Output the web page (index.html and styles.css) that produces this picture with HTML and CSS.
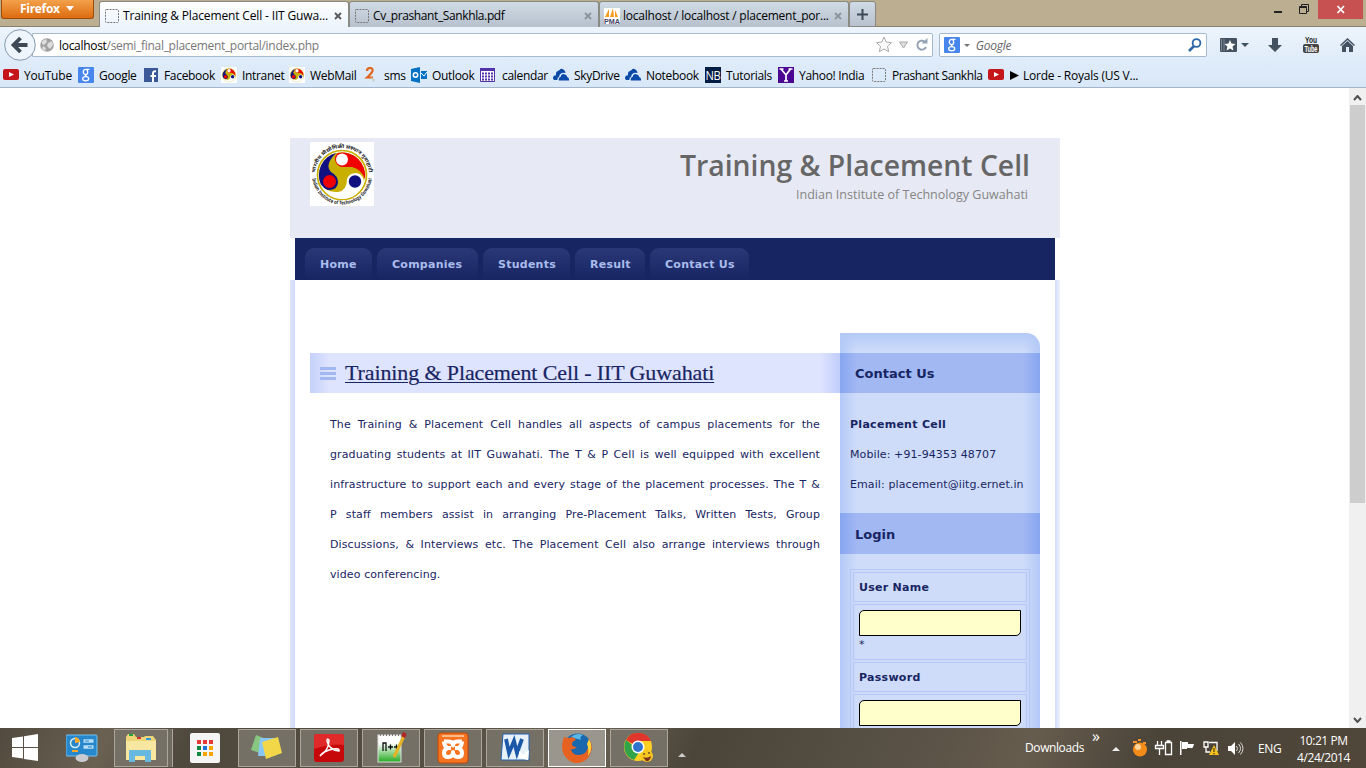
FILE: index.html
```html
<!DOCTYPE html>
<html lang="en">
<head>
<meta charset="utf-8">
<title>Training &amp; Placement Cell - IIT Guwahati</title>
<link rel="stylesheet" href="styles.css">
</head>
<body>
<svg width="0" height="0" class="defs">
  <symbol id="blank" viewBox="0 0 16 16"><rect x="1.5" y="1.5" width="13" height="13" rx="1" fill="none" stroke="#777" stroke-dasharray="2 1"/></symbol>
  <symbol id="yt" viewBox="0 0 16 16"><rect y="2" width="16" height="11" rx="2" fill="#c4161b"/><path d="M6 5v5l5-2.500z" fill="#fff"/></symbol>
  <symbol id="goog" viewBox="0 0 16 16"><rect width="16" height="16" rx="1" fill="#4787ed"/><ellipse cx="7.500" cy="5" rx="2.200" ry="2.700" fill="none" stroke="#fff" stroke-width="1.300"/><path d="M8 2.300h3.500M8.500 7.500q-2 1.500 0 2.300" fill="none" stroke="#fff" stroke-width="1.200"/><ellipse cx="7.700" cy="11.700" rx="3" ry="2.100" fill="none" stroke="#fff" stroke-width="1.300"/></symbol>
  <symbol id="emblem" viewBox="0 0 64 64">
    <circle cx="32" cy="33" r="24.500" fill="#fff" stroke="#c9b000" stroke-width="1.700"/>
    <circle cx="32" cy="33" r="22.800" fill="#c9b000"/>
    <path d="M26 11A23 23 0 0 0 11 43Q14 48 20 48Q28 47 28 40Q28 34 21 30Q14 23 26 11z" fill="#101080"/>
    <path d="M28 11A23 23 0 0 1 55 37Q51 27 42 25Q36 25 31 25Q25 22 25 17Q25 13 28 11z" fill="#f00000"/>
    <path d="M10.500 42A23 23 0 0 0 54 41Q54 32 46 31Q39 31 37 37Q37 49 28 50Q17 51 10.500 42z" fill="#fff"/>
    <circle cx="32" cy="17.500" r="6" fill="#fff"/><circle cx="19.500" cy="39.500" r="6.500" fill="#f00000"/><circle cx="45" cy="39.500" r="6.200" fill="#101080"/>
  </symbol>
  <symbol id="cloud" viewBox="0 0 16 16"><path d="M0 11.500Q-.2 8.500 3 8.300Q2.500 4 6 3.500Q8 .5 11 3Q12.500 4 12.500 6Q7 5 6 10Q4 10.500 4.500 13H1z" fill="#0c4aa8"/><path d="M6 13.500Q5 10.500 7.500 10Q8.500 5.500 12.500 7.700Q14 8 14.200 10Q16.500 11 16 13.500z" fill="#0c4aa8"/></symbol>
  <symbol id="x" viewBox="0 0 8 8"><path d="M1 1l6 6M7 1L1 7" stroke="currentColor" stroke-width="1.800"/></symbol>
</svg>

<header class="titlebar">
  <div class="firefox"><span>Firefox</span><svg width="8" height="5"><path d="M0 0h8L4 5z" fill="#fff"/></svg></div>
  <div class="tab active"><svg class="i16"><use href="#blank"/></svg><span>Training &amp; Placement Cell - IIT Guwa...</span><svg class="close"><use href="#x"/></svg></div>
  <div class="tab"><svg class="i16"><use href="#blank"/></svg><span>Cv_prashant_Sankhla.pdf</span><svg class="close"><use href="#x"/></svg></div>
  <div class="tab"><svg class="i16" viewBox="0 0 16 16"><rect width="16" height="16" fill="#fff"/><path d="M1 9L5 1v8zM6 9L9 0l1 9zM11 9l0-7 3 7z" fill="#f79a1c"/><text x="0" y="15.500" textLength="16" lengthAdjust="spacingAndGlyphs" class="pma">PMA</text></svg><span>localhost / localhost / placement_por...</span><svg class="close"><use href="#x"/></svg></div>
  <div class="newtab"><svg width="11" height="11"><path d="M5.500 0v11M0 5.500h11" stroke="#3d4957" stroke-width="2"/></svg></div>
  <div class="winbtns"><svg width="112" height="20"><path d="M21 12h8" stroke="#222" stroke-width="2"/><path d="M46.500 6.500h7v7h-7z M48.500 6V4.500h7v7H54M46 7.500h8" fill="none" stroke="#222"/><rect x="65" width="45" height="19" fill="#c75050"/><path d="M84.500 6l6.500 7M91 6l-6.500 7" stroke="#fff" stroke-width="1.800"/></svg></div>
</header>

<nav class="toolbar">
  <svg class="back" viewBox="0 0 32 32"><circle cx="16" cy="16" r="15.300" fill="#eef5fc" stroke="#8598ad"/><path d="M23.500 16H10M16.500 9L9.500 16l7 7" fill="none" stroke="#3d4957" stroke-width="3.800"/></svg>
  <div class="url">
    <svg width="14" height="14" viewBox="0 0 14 14"><circle cx="7" cy="7" r="6.800" fill="#a1a1a1"/><path d="M2 3l4-2 1 3-3 3-2-1zM8 5l4-2 1 4-3 4-3-3zM3 8l3 2-1 3-3-2z" fill="#ddd"/></svg>
    <span class="addr"><b>localhost</b>/semi_final_placement_portal/index.php</span>
    <svg class="urlicons" width="54" height="20" viewBox="0 0 54 20"><path d="M8 2l2.200 5 5.300.6-4 3.700 1.200 5.400L8 14l-4.700 2.700 1.200-5.400-4-3.700 5.300-.6z" fill="#fafafa" stroke="#aaa"/><path d="M23.500 7h8l-4 6z" fill="#ddd" stroke="#aaa"/><path d="M48.500 6.500A4.500 4.500 0 1 0 50 12" fill="none" stroke="#97a4b5" stroke-width="2"/><path d="M45.500 8.500h6V3z" fill="#97a4b5"/></svg>
  </div>
  <div class="search"><svg class="i16"><use href="#goog"/></svg><svg class="caret" width="6" height="3"><path d="M0 0h6L3 3z" fill="#777"/></svg><i>Google</i><svg class="mag" width="14" height="14"><circle cx="8.500" cy="5" r="3.900" fill="none" stroke="#2d67a8" stroke-width="1.800"/><path d="M6 8L1 13" stroke="#2d67a8" stroke-width="2.500"/></svg></div>
  <svg class="tools" width="146" height="20" viewBox="0 0 146 20"><g fill="#445160"><rect y="3" width="17" height="14" rx="1"/><path d="M1.500 4v12M4 4v12" stroke="#7c8894"/><path d="M10 5l1.500 3.500 4 .4-3 2.700.9 4-3.400-2-3.500 2 .9-4-3-2.700 4-.4z" fill="#fff"/><path d="M21 8h8l-4 4z"/><path d="M52 3h6v7h4l-7 7-7-7h4z"/><rect x="83" y="9" width="16" height="9" rx="2" fill="#444"/><path d="M120 10l7.500-7 7.500 7-1 1-6.500-6-6.500 6z"/><path d="M122 11l5.500-5 5.500 5v6h-4v-5h-3v5h-4z"/></g><text x="85" y="7.500" textLength="12" lengthAdjust="spacingAndGlyphs" class="yt1">You</text><text x="84.500" y="16.500" textLength="13" lengthAdjust="spacingAndGlyphs" class="yt2">Tube</text></svg>
</nav>

<nav class="bookmarks">
  <span><svg class="i16"><use href="#yt"/></svg>YouTube</span>
  <span><svg class="i16"><use href="#goog"/></svg>Google</span>
  <span><svg class="i16" viewBox="0 0 16 16"><rect x="1" y="1" width="14" height="14" fill="#3b5998"/><path d="M10 15V6q0-2 3-1.700M7.500 9H13" fill="none" stroke="#fff" stroke-width="2"/></svg>Facebook</span>
  <span><svg class="i16 white" viewBox="3 4 58 58"><use href="#emblem" width="64" height="64"/></svg>Intranet</span>
  <span><svg class="i16 white" viewBox="3 4 58 58"><use href="#emblem" width="64" height="64"/></svg>WebMail</span>
  <span><svg class="i16" viewBox="0 0 16 16"><path d="M3 4q0-3 3-3t2.500 3Q8 6 3 10.500h6" fill="none" stroke="#e1641c" stroke-width="2.200"/><path d="M7 10l4 3-2 2z" fill="#ccc"/></svg>sms</span>
  <span><svg class="i16" viewBox="0 0 16 16"><path d="M0 2l9-2v16l-9-2z" fill="#0072c6"/><circle cx="4.500" cy="8" r="2.200" fill="none" stroke="#fff" stroke-width="1.500"/><path d="M10 4h6v8h-6z" fill="#0072c6"/><path d="M10 6l3 3 3-4" stroke="#fff" fill="none"/></svg>Outlook</span>
  <span><svg class="i16" viewBox="0 0 16 16"><path d="M.5 1.500h14v13H.5z" fill="#fff" stroke="#5133ab"/><path d="M0 1h15v3H0z" fill="#5133ab"/><path d="M2 6.500h11M2 9.500h11M2 12.500h11" stroke="#5133ab" stroke-width="2" stroke-dasharray="2 1"/></svg>calendar</span>
  <span><svg class="i16"><use href="#cloud"/></svg>SkyDrive</span>
  <span><svg class="i16"><use href="#cloud"/></svg>Notebook</span>
  <span><svg class="i16" viewBox="0 0 16 16"><rect width="16" height="16" fill="#051c44"/><text x="0.500" y="12.500" textLength="15" lengthAdjust="spacingAndGlyphs" class="wt">NB</text></svg>Tutorials</span>
  <span><svg class="i16" viewBox="0 0 16 16"><rect width="16" height="16" fill="#4b0791"/><path d="M3 2l5 6 4.500-6M8 8v6M1.500 2h4M10.500 2h4M6 14h4" fill="none" stroke="#fff" stroke-width="1.700"/></svg>Yahoo! India</span>
  <span><svg class="i16"><use href="#blank"/></svg>Prashant Sankhla</span>
  <span class="lorde"><svg class="i16"><use href="#yt"/></svg><svg class="play" width="9" height="9"><path d="M0 0l9 4.500L0 9z"/></svg>Lorde - Royals (US V...</span>
</nav>

<div class="viewport">
  <main class="page">
    <header class="banner">
      <svg class="logo" viewBox="0 0 64 64"><rect width="64" height="64" fill="#fff"/><use href="#emblem" width="64" height="64"/><path id="arc1" d="M5 33A27 27 0 0 1 59 33" fill="none"/><path id="arc2" d="M2 32.500A30 30 0 0 0 62 32.500" fill="none"/><text class="ring"><textPath href="#arc1" startOffset="2" textLength="80" lengthAdjust="spacingAndGlyphs">भारतीय प्रौद्योगिकी संस्थान गुवाहाटी</textPath></text><text class="ring"><textPath href="#arc2" startOffset="4" textLength="86" lengthAdjust="spacingAndGlyphs">Indian Institute of Technology Guwahati</textPath></text></svg>
      <svg class="brand" width="352" height="72"><text class="b1" x="0" y="34" textLength="350" lengthAdjust="spacingAndGlyphs">Training &amp; Placement Cell</text><text class="b2" x="116" y="57" textLength="232" lengthAdjust="spacingAndGlyphs">Indian Institute of Technology Guwahati</text></svg>
    </header>
    <nav class="menu"><a>Home</a><a>Companies</a><a>Students</a><a>Result</a><a>Contact Us</a></nav>
    <div class="body">
      <section class="article">
        <h1><i class="bars"></i><u>Training &amp; Placement Cell - IIT Guwahati</u></h1>
        <p><span>The Training &amp; Placement Cell handles all aspects of campus placements for the</span> <span>graduating students at IIT Guwahati. The T &amp; P Cell is well equipped with excellent</span> <span>infrastructure to support each and every stage of the placement processes. The T &amp;</span> <span>P staff members assist in arranging Pre-Placement Talks, Written Tests, Group</span> <span>Discussions, &amp; Interviews etc. The Placement Cell also arrange interviews through</span> <span>video conferencing.</span></p>
      </section>
      <aside class="side">
        <h2>Contact Us</h2>
        <div class="contact"><b>Placement Cell</b><span>Mobile: +91-94353 48707</span><span>Email: placement@iitg.ernet.in</span></div>
        <h2 class="login">Login</h2>
        <div class="form">
          <div class="label">User Name</div>
          <div class="field"><input><span>*</span></div>
          <div class="label">Password</div>
          <div class="field"><input type="password"></div>
        </div>
      </aside>
    </div>
  </main>
  <div class="scroll"><svg width="9" height="6"><path d="M1 5l3.500-4L8 5" fill="none" stroke="#505050" stroke-width="2"/></svg><div class="thumb"></div><svg width="9" height="6"><path d="M1 1l3.500 4L8 1" fill="none" stroke="#505050" stroke-width="2"/></svg></div>
</div>

<footer class="taskbar">
  <div class="task plain"><svg width="28" height="28"><path d="M1 4l11-1.600V13H1zM13 2.200L27 0v13H13zM1 14h11v10.500L1 23zM13 14h14v13l-14-2z" fill="#fff"/></svg></div>
  <div class="task plain"><svg width="32" height="28"><rect x="0" y="1" width="31" height="21" rx="1" fill="#2787cc" stroke="#76c1ee"/><circle cx="9" cy="9" r="4.500" fill="none" stroke="#d7effb" stroke-width="1.500"/><path d="M9 9V3a6 6 0 0 1 5 5z" fill="#ffa726"/><path d="M17.500 7h10M17.500 13h10" stroke="#b9def5" stroke-width="3.500"/><path d="M19 7h4M22 13h4" stroke="#2787cc"/><path d="M6 17h6" stroke="#f9a825" stroke-width="2"/><ellipse cx="16" cy="24" rx="6.500" ry="4" fill="#c8cbd0"/></svg></div>
  <div class="task stack"><svg width="34" height="30"><path d="M2 4l2-3h6l2 3h8l1-1h8l3 4v20H2z" fill="#ecd477"/><path d="M5 2h4" stroke="#22a43c" stroke-width="2"/><path d="M13 5h4" stroke="#c33" stroke-width="2"/><path d="M22 6h5" stroke="#39d" stroke-width="2"/><path d="M2 8h30v19H2z" fill="#f8e7a0"/><path d="M5 29V18q0-1 1-1h20q1 0 1 1v11h-6v-6H11v6z" fill="#68b9df"/></svg></div>
  <div class="task plain"><svg width="30" height="30"><rect width="30" height="30" rx="2" fill="#f5f5f5"/><g stroke-width="4" fill="none"><path d="M7 9h16" stroke="#e53935" stroke-dasharray="4 2"/><path d="M7 15h4M7 21h4" stroke="#138a43"/><path d="M13 15h4" stroke="#1976d2"/><path d="M19 15h4M13 21h4M19 21h4" stroke="#f9a500"/></g></svg></div>
  <div class="task"><svg width="34" height="28"><path d="M6 1l10 4-3 15-12-4z" fill="#88c782"/><path d="M10 4h15v18H8z" fill="#87c7f2"/><path d="M12 8l16-5 4 16-16 6z" fill="#f2d849"/></svg></div>
  <div class="task"><svg width="30" height="28"><rect width="30" height="28" rx="3" fill="#c7080b"/><path d="M0 3q0-3 3-3h24q3 0 3 3v8Q18 9 0 15z" fill="#e02a2a"/><path d="M6 22Q15 16 15 6q-2-2-2 1 2 9 12 10 1-3-6-2Q9 17 6 22z" fill="none" stroke="#fff" stroke-width="1.500"/></svg></div>
  <div class="task"><svg width="32" height="32"><defs><linearGradient id="npp" x2="0" y2="1"><stop offset=".3" stop-color="#fff"/><stop offset="1" stop-color="#25aa20"/></linearGradient></defs><rect x="3" y="3" width="23" height="27" fill="url(#npp)" stroke="#ddd"/><path d="M5 3h20" stroke="#777" stroke-width="2" stroke-dasharray="1 2"/><path d="M8 19v-8h3v8M13 15h5M15.500 12.500v5M19 15h5M21.500 12.500v5" stroke="#111" fill="none" stroke-width="1.300"/><path d="M29 4L19 25" stroke="#e5b323" stroke-width="3"/><path d="M30 1l-2 4" stroke="#b32424" stroke-width="4"/></svg></div>
  <div class="task"><svg width="32" height="32"><rect x="1" y="1" width="30" height="30" rx="3" fill="#f57321" stroke="#bd4907"/><path d="M5 4h22" stroke="#fbb98a" stroke-width="2"/><g fill="none" stroke="#fff" stroke-width="4" stroke-linejoin="round"><path d="M7 9.500h5q4 0 4 4 0-4 4-4h5M7 9.500q0 5 4 6.500-4 1-4 5 0 4 4 4 5 0 5-5 0 5 5 5 4 0 4-4 0-4-4-5 4-1.500 4-6.500M11 16h3M18 16h3"/></g></svg></div>
  <div class="task"><svg width="30" height="30"><path d="M3 1h26v26H1z" fill="#e8f1fa" stroke="#2261aa"/><path d="M6 6l3 14 5-12 3 12 5-14" fill="none" stroke="#1b58a7" stroke-width="3.800"/><path d="M19 18l4 4 6-5-1 10-9-2z" fill="#fff"/></svg></div>
  <div class="task lit"><svg width="30" height="30"><circle cx="15.500" cy="14.500" r="14" fill="#1b68ae"/><path d="M9 4q5-5 12-2-4 2-2 5z" fill="#58b9e5"/><path d="M2 4Q-2 14 2 22q6 9 15 8 11-2 13-15 0-5-3-9 0 5-1 8-1 7-9 8-7 0-8-6 3 1 6-2-5 0-5-3 0-3 4-4-2-4-7-2z" fill="#e76220"/><path d="M27 6q5 9-1 17 1-8-1-12z" fill="#ffd43b"/></svg></div>
  <div class="task"><svg width="30" height="30"><circle cx="14" cy="14" r="14" fill="#ffd021"/><path d="M14 14L2 7a14 14 0 0 1 25 1H14z" fill="#e0362b"/><path d="M2 7a14 14 0 0 0 8 20l6-9z" fill="#31a449"/><circle cx="14" cy="14" r="6.500" fill="#fff"/><circle cx="14" cy="14" r="5" fill="#2f73cd"/><circle cx="23" cy="23" r="6" fill="#f6c522"/><path d="M19 24q4 2 8-1-1 6-5 5z" fill="#7a311c"/><path d="M20 20v2M25 19v2" stroke="#222"/></svg></div>
  <svg class="up1" width="8" height="4"><path d="M0 4h8L4 0z" fill="#ccc"/></svg>
  <span class="downloads">Downloads</span><span class="chev">»</span>
  <svg class="tray" width="146" height="20" viewBox="0 0 146 20"><path d="M0 13h8L4 9z" fill="#eee"/><g transform="translate(-3 0)"><circle cx="31" cy="11.500" r="7" fill="#f58b19"/><path d="M24 4h4M29 2h3M34 5h3" stroke="#ff922b" stroke-width="2"/><circle cx="29" cy="9" r="3" fill="#ffd59d"/><g fill="none" stroke="#fff"><path d="M48.500 3v5M52.500 3v5M46.500 7.500h8v3h-8zM50.500 11v6M56.500 4.500h6v12h-6zM57.500 3h4" stroke-width="1.300"/></g><path d="M71 3h1.500v14H71zM73 4h6v2h6q-1 5-3 4h-4v1h-5z" fill="#fff"/><path d="M95 4h4v5h-4zM97 9v5h4M100 4.500h8V13" fill="none" stroke="#fff" stroke-width="1.300"/><path d="M105 7l5 10h-10z" fill="#f7c318"/><path d="M105 10v4M105 15v1.500" stroke="#222"/><path d="M119 8h3l4-4v13l-4-4h-3z" fill="#fff"/><path d="M127.500 8q2 2.500 0 5M129.500 6q4 4.500 0 9M131.500 4.500q5 6 0 12" fill="none" stroke="#ddd"/></g></svg>
  <span class="lang">ENG</span>
  <div class="clock"><span>10:21 PM</span><span>4/24/2014</span></div>
</footer>
</body>
</html>
```
FILE: styles.css
```css
* { box-sizing: border-box; }
body { margin: 0; width: 1366px; height: 768px; overflow: hidden; display: flex; flex-direction: column; background: #fff; font: 12px "Open Sans", "Noto Sans", sans-serif; color: #000; }
svg { display: block; flex: none; }
.defs { position: absolute; }
.i16 { width: 16px; height: 16px; }
.white { background: #fff; }

.titlebar { height: 27px; flex: none; display: flex; background: #bcae91; border-bottom: 1px solid #8b8069; }
.firefox { width: 93px; height: 19px; margin: 0 5px 0 1px; padding: 0 0 2px 18px; display: flex; align-items: center; gap: 6px; border: 1px solid #9a4c0a; border-top: 0; border-radius: 0 0 3px 3px; background: linear-gradient(#f2a14a, #dd6c10); color: #fff; font-weight: 700; font-size: 12px; letter-spacing: -.3px; }
.tab { width: 250px; height: 26px; margin-top: 1px; padding: 2px 6px 0 4px; display: flex; align-items: center; border: 1px solid #8a8a85; border-bottom: 0; border-radius: 3px 3px 0 0; background: linear-gradient(#d0dbe6, #b6c1cd); white-space: nowrap; }
.tab.active { height: 27px; background: linear-gradient(#fff, #eaf3fc); padding-bottom: 1px; }
.tab span { margin-left: 3px; font-size: 12px; letter-spacing: -.23px; }
.tab.active span { letter-spacing: -.15px; }
.tab:nth-child(3) span { letter-spacing: -.38px; }
.close { width: 8px; height: 8px; margin-left: auto; color: #8b939c; }
.active .close { color: #555; }
.newtab { width: 27px; height: 26px; margin-top: 1px; display: grid; place-items: center; border: 1px solid #8a8a85; border-radius: 3px 3px 0 0; background: linear-gradient(#d0dbe6, #b6c1cd); }
.winbtns { margin-left: auto; width: 113px; }
.pma { font: bold 6.5px "Liberation Sans", sans-serif; fill: #446; }

.toolbar { height: 36px; flex: none; display: flex; align-items: center; background: linear-gradient(#edf4fc, #deebf9); }
.back { width: 32px; height: 32px; margin-left: 4px; z-index: 1; }
.url { width: 903px; height: 24px; margin-left: -4px; padding: 0 2px 0 7px; display: flex; align-items: center; background: #fff; border: 1px solid #a7b9cc; border-radius: 0 2px 2px 0; }
.addr { margin-left: 5px; color: #777; font-size: 12px; letter-spacing: -.3px; }
.addr b { font-weight: 400; color: #000; }
.urlicons { margin-left: auto; }
.search { width: 269px; height: 24px; margin-left: 6px; padding: 0 4px; display: flex; align-items: center; background: #fff; border: 1px solid #a7b9cc; border-radius: 2px; }
.caret { margin: 0 6px 0 4px; }
.search i { color: #666; font-size: 12px; letter-spacing: -.2px; }
.mag { margin-left: auto; }
.tools { margin-left: 13px; }
.yt1 { font: bold 8.5px "Liberation Sans", sans-serif; fill: #222; }
.yt2 { font: bold 8.5px "Liberation Sans", sans-serif; fill: #fff; }

.bookmarks { height: 25px; flex: none; padding-left: 3px; display: grid; grid-template-columns: 75px 65px 78px 68px 75px 47px 69px 73px 72px 80px 73px 93px 117px 160px; background: linear-gradient(#deebf9, #d9e8f8); border-bottom: 1px solid #a3b5ca; }
.bookmarks span { display: flex; align-items: center; gap: 5px; white-space: nowrap; font-size: 12px; letter-spacing: -.32px; }
.bookmarks span:nth-child(1) { letter-spacing: -.2px; }
.bookmarks span:nth-child(13) { letter-spacing: -.42px; }
.bookmarks .lorde { letter-spacing: -.22px; }
.bookmarks span:nth-child(6) { gap: 4px; }
.bookmarks span:nth-child(8) { gap: 6px; }
.bookmarks .play { margin: 0 -1px 0 1px; }
.wt { font: 12px "Open Sans", sans-serif; fill: #fff; }

.viewport { height: 640px; flex: none; display: flex; justify-content: space-between; overflow: hidden; }
.page { width: 770px; margin: 50px 0 0 290px; font-family: "DejaVu Sans", Verdana, sans-serif; font-size: 11px; letter-spacing: .1px; color: #182563; }
.banner { height: 100px; padding: 4px 28px 0 20px; display: flex; justify-content: space-between; background: #e7eaf4; letter-spacing: 0; }
.logo { width: 64px; height: 64px; }
.brand { overflow: visible; }
.ring { font: bold 5px "Noto Sans", "Liberation Sans", sans-serif; fill: #222; }
.b1 { font: 600 29.5px "Open Sans", sans-serif; fill: #666; }
.b2 { font: 13px "Open Sans", sans-serif; fill: #858585; }
.menu { height: 42px; margin: 0 5px; padding: 10px 10px 0; display: flex; gap: 5px; background: #182563; letter-spacing: .25px; }
.menu a { height: 32px; padding: 1px 0 0 15px; line-height: 32px; font-weight: 700; color: #a9bdec; border-radius: 9px 9px 0 0; background: linear-gradient(#2a3878, #182563); white-space: nowrap; }
.menu a:nth-child(1) { width: 67px; }
.menu a:nth-child(2) { width: 101px; }
.menu a:nth-child(3) { width: 87px; }
.menu a:nth-child(4) { width: 70px; }
.menu a:nth-child(5) { width: 99px; }
.body { height: 460px; padding: 53px 20px 0; display: flex; background: linear-gradient(90deg, #dfe7fc, #cfdbfa 5px, #fff 5px, #fff 765px, #d2ddfb 765px, #edf1fe); }
.article { width: 530px; padding-top: 20px; }
h1 { height: 40px; margin: 0; padding-left: 10px; display: flex; align-items: center; gap: 9px; font: 22px "Liberation Serif", serif; letter-spacing: -.12px; -webkit-text-stroke: .2px #182563; background: linear-gradient(90deg, #c5d1fb, #dfe4fe 20px, #dfe4fe 510px, #c1cdfb); white-space: nowrap; }
h1 u { text-decoration-thickness: 1px; text-underline-offset: 2px; }
.bars { width: 16px; height: 13px; background: repeating-linear-gradient(#a1b8f3 0 3px, transparent 3px 5px); }
.article p { margin: 17px 20px 0; line-height: 30px; }
.article p span { display: block; white-space: nowrap; text-align: justify; text-align-last: justify; }
.article p span:last-child { text-align-last: left; }
.side { width: 200px; height: 440px; padding-top: 20px; border-radius: 0 14px 0 0; background: linear-gradient(#b3c9f6, transparent 18px), linear-gradient(90deg, #b3c9f7, #cedcf9 17px, #cedcf9 183px, #b3c9f7); }
h2 { height: 40px; margin: 0; padding-left: 15px; font-size: 13px; letter-spacing: 0; line-height: 41px; background: linear-gradient(90deg, #87a5f0, #a1b8f3 17px, #a1b8f3 183px, #87a5f0); }
.contact { height: 120px; padding: 17px 0 0 10px; display: flex; flex-direction: column; line-height: 30px; white-space: nowrap; }
.contact b, .label { letter-spacing: .28px; }
.login { height: 41px; line-height: 43px; }
.form { margin: 15px 10px 0; padding: 2px; display: flex; flex-direction: column; gap: 2px; border: 1px solid #b5c7f5; }
.label { height: 30px; padding: 1px 0 0 5px; border: 1px solid #b5c7f5; font-weight: 700; line-height: 28px; }
.field { height: 56px; padding: 5px; border: 1px solid #b5c7f5; display: flex; flex-direction: column; gap: 2px; }
.field input { width: 162px; height: 26px; flex: none; border: 1px solid #000; border-radius: 5px 0 5px 0; background: #ffc; }
.scroll { width: 17px; padding: 7px 0 5px; display: flex; flex-direction: column; align-items: center; background: #f0f0f0; }
.thumb { width: 15px; height: 398px; margin: 4px 0 auto; background: #cdcdcd; }

.taskbar { height: 40px; flex: none; display: flex; padding-top: 1px; color: #fff; background: linear-gradient(115deg, #524a3e, #6a6153 8%, #4f483d 14%, #554e43 34%, #6d6558 42%, #4b4438 51%, #5b5347 68%, #665c4e 75%, #4a4338 84%, #50473a); }
.task { width: 58px; height: 38px; margin-right: 4px; display: grid; place-items: center; border: 1px solid #aaa69c; background: #747066; }
.task.plain { border-color: transparent; background: none; }
.task:nth-child(1) { width: 50px; margin: 0; }
.task:nth-child(2) { width: 64px; margin: 0; }
.task:nth-child(3) { width: 54px; margin-right: 12px; box-shadow: 4px 0 #706b61, 5px 0 #aaa69c; }
.task:nth-child(4) { width: 50px; margin-right: 8px; }
.task.lit { border-color: #fff; background: #9a968e; }
.up1 { margin: 24px 0 0 6px; }
.downloads { margin: 10px 0 0 339px; width: 67px; font-size: 12px; letter-spacing: -.4px; }
.chev { font-size: 16px; line-height: 15px; width: 20px; }
.tray { margin-top: 9px; }
.lang { margin-top: 11px; width: 35px; font-size: 12px; letter-spacing: -.4px; }
.clock { display: flex; flex-direction: column; align-items: center; width: 61px; padding-top: 3px; font-size: 12px; line-height: 17px; letter-spacing: -.45px; }
```
